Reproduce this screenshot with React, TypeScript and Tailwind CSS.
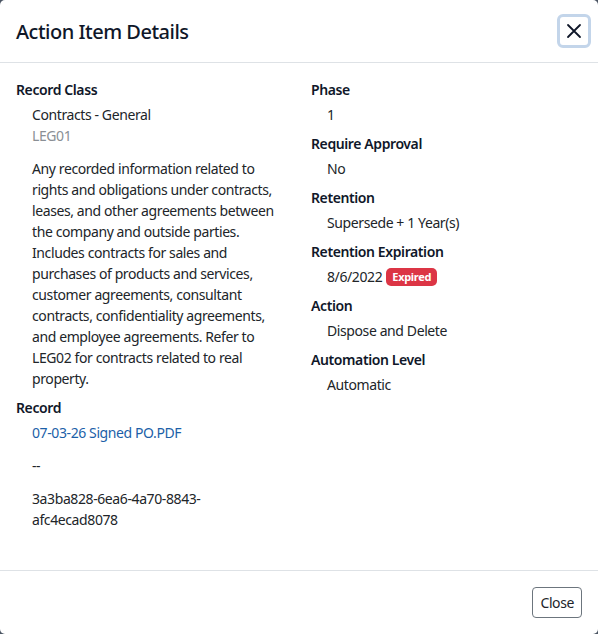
import React from "react";

const lines = [
  "Any recorded information related to",
  "rights and obligations under contracts,",
  "leases, and other agreements between",
  "the company and outside parties.",
  "Includes contracts for sales and",
  "purchases of products and services,",
  "customer agreements, consultant",
  "contracts, confidentiality agreements,",
  "and employee agreements. Refer to",
  "LEG02 for contracts related to real",
  "property.",
];

function Field({ label, children }: { label: string; children: React.ReactNode }) {
  return (
    <div className="mb-2">
      <div className="font-semibold text-[#0f1729] leading-[21px]">{label}</div>
      <div className="mt-1 pl-4 leading-[21px] text-[#212529]">{children}</div>
    </div>
  );
}

export default function App() {
  return (
    <div className="w-[598px] h-[634px] bg-[#4b5563]" style={{ fontFamily: '"Noto Sans", "Open Sans", sans-serif' }}>
      <div className="w-full h-full bg-white rounded-[5px] flex flex-col text-[14px] text-[#212529] tracking-[-0.4px]">
        <div className="h-[63px] border-b border-[#dee2e6] flex items-center justify-between pl-4 pr-[7px]">
          <h1 className="text-[20px] font-medium text-[#0f1729] tracking-[-0.5px] mt-[2px]">Action Item Details</h1>
          <button className="w-[34px] h-[34px] rounded-[6px] border-[3px] border-[#c3d5ea] flex items-center justify-center">
            <svg width="18" height="18" viewBox="0 0 18 18" fill="none" stroke="#0f1729" strokeWidth="1.8" strokeLinecap="round">
              <path d="M3 3 L15 15 M15 3 L3 15" />
            </svg>
          </button>
        </div>
        <div className="flex-1 px-4 pt-4 flex gap-6">
          <div className="w-[271px]">
            <div className="font-semibold text-[#0f1729] leading-[21px]">Record Class</div>
            <div className="mt-1 pl-4 leading-[21px]">
              <div>Contracts - General</div>
              <div className="text-[#8a8f95]">LEG01</div>
              <div className="mt-3">
                {lines.map((l) => (
                  <div key={l} className="whitespace-nowrap">{l}</div>
                ))}
              </div>
            </div>
            <div className="mt-2 font-semibold text-[#0f1729] leading-[21px]">Record</div>
            <div className="mt-1 pl-4 leading-[21px]">
              <div className="text-[#1c5fa8]">07-03-26 Signed PO.PDF</div>
              <div className="mt-3">--</div>
              <div className="mt-3">
                <div>3a3ba828-6ea6-4a70-8843-</div>
                <div>afc4ecad8078</div>
              </div>
            </div>
          </div>
          <div className="w-[271px]">
            <Field label="Phase">1</Field>
            <Field label="Require Approval">No</Field>
            <Field label="Retention">Supersede + 1 Year(s)</Field>
            <Field label="Retention Expiration">
              <span className="inline-flex items-center gap-1">
                8/6/2022
                <span className="inline-flex items-center h-[18px] px-[6px] rounded-[5px] bg-[#dc3545] text-white text-[11px] font-bold leading-none tracking-[-0.3px]">Expired</span>
              </span>
            </Field>
            <Field label="Action">Dispose and Delete</Field>
            <Field label="Automation Level">Automatic</Field>
          </div>
        </div>
        <div className="h-[64px] border-t border-[#dee2e6] flex items-center justify-end pr-4">
          <button className="h-[31px] px-[7px] rounded-[4px] border border-[#6c757d] text-[14px] text-[#212529]">Close</button>
        </div>
      </div>
    </div>
  );
}
